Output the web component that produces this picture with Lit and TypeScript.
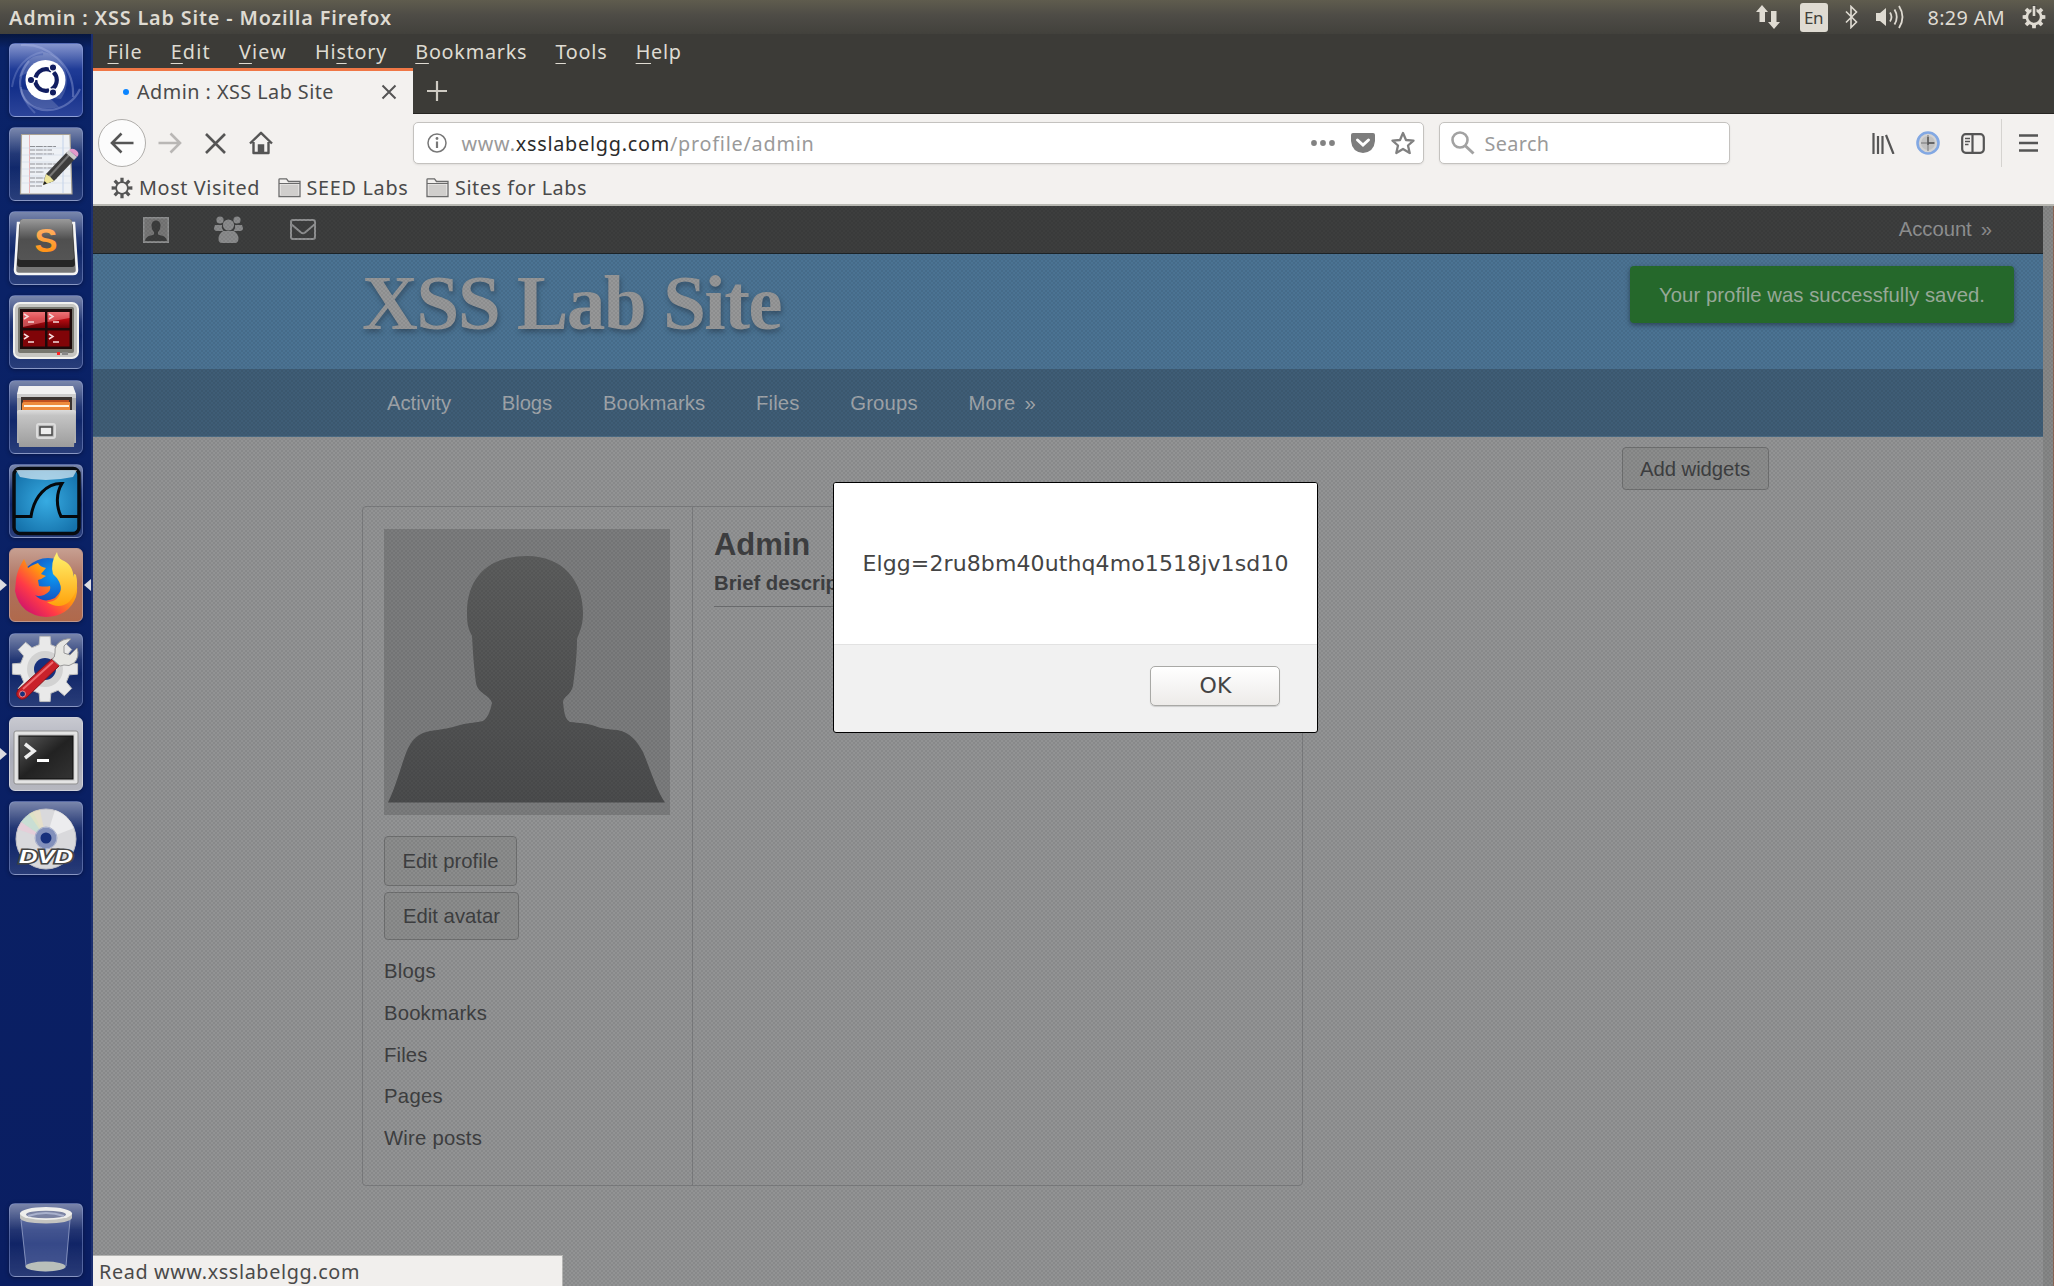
import { LitElement, html, svg, css } from "lit";
import { customElement, property } from "lit/decorators.js";

/** A label whose tracking is adjusted so that it spans a given width. */
@customElement("fit-text")
class FitText extends LitElement {
  @property({ type: Number }) w = 0;
  static styles = css`
    :host { display: inline-block; white-space: pre; }
    .t { display: inline-block; }
  `;
  render() { return html`<span class="t"><slot></slot></span>`; }
  firstUpdated() {
    const n = (this.textContent || "").length;
    const el = this.renderRoot.querySelector(".t") as HTMLElement;
    const natural = el.getBoundingClientRect().width;
    if (this.w && n) this.style.letterSpacing = ((this.w - natural) / n).toFixed(3) + "px";
  }
}

const gearPath = (teeth: number, ro: number, ri: number, c: number) => {
  let d = "";
  for (let i = 0; i < teeth; i++) {
    const s = (Math.PI * 2) / teeth, a = i * s - Math.PI / 2;
    const p = (r: number, o: number) => `${(c + r * Math.cos(a + o)).toFixed(2)} ${(c + r * Math.sin(a + o)).toFixed(2)}`;
    d += `${i ? "L" : "M"}${p(ri, -s * 0.3)}L${p(ro, -s * 0.2)}L${p(ro, s * 0.2)}L${p(ri, s * 0.3)}`;
  }
  return d + "Z";
};

const defs = svg`<defs>
  <linearGradient id="steel" x1="0" y1="0" x2="0" y2="1"><stop offset="0" stop-color="#dcdcdc"/><stop offset=".15" stop-color="#c4c4c4"/><stop offset="1" stop-color="#9c9c9c"/></linearGradient>
  <linearGradient id="dark" x1="0" y1="0" x2="0" y2="1"><stop offset="0" stop-color="#9a9a9a"/><stop offset=".5" stop-color="#4f4f4f"/><stop offset="1" stop-color="#555"/></linearGradient>
  <linearGradient id="scr" x1="0" y1="0" x2="1" y2="1"><stop offset="0" stop-color="#5a5a5a"/><stop offset=".5" stop-color="#222"/><stop offset="1" stop-color="#333"/></linearGradient>
  <linearGradient id="red" x1="0" y1="0" x2="0" y2="1"><stop offset="0" stop-color="#e0585c"/><stop offset=".4" stop-color="#c00c12"/><stop offset="1" stop-color="#6a0004"/></linearGradient>
  <linearGradient id="org" x1="0" y1="0" x2="0" y2="1"><stop offset="0" stop-color="#ffb87a"/><stop offset="1" stop-color="#ff8a00"/></linearGradient>
  <linearGradient id="fox" x1="1" y1="0" x2="0" y2="1"><stop offset="0" stop-color="#ffe945"/><stop offset=".4" stop-color="#ff980e"/><stop offset=".65" stop-color="#ff3a47"/><stop offset="1" stop-color="#b5007f"/></linearGradient>
  <linearGradient id="tail" x1="0" y1="0" x2="0" y2="1"><stop offset="0" stop-color="#fff36e"/><stop offset="1" stop-color="#ffa20c"/></linearGradient>
  <radialGradient id="globe" cx=".6" cy=".3" r=".8"><stop offset="0" stop-color="#0a9bf5"/><stop offset="1" stop-color="#20219c"/></radialGradient>
  <radialGradient id="sea" cx=".5" cy=".5" r=".6"><stop offset="0" stop-color="#37abe2"/><stop offset="1" stop-color="#1572ab"/></radialGradient>
</defs>`;

const launcher: { name: string; cls?: string; art: unknown }[] = [
  { name: "Dash", cls: "dash", art: svg`
    <path d="M34 9C58 12 64 40 52 56L36 54ZM12 46C10 60 30 70 50 64L36 50ZM10 34C14 18 26 8 40 14L30 24Z" fill="#fff" opacity=".16"/>
    <path d="M12 2C38 0 66 22 64 54M71 46C60 70 28 74 16 56C8 44 10 30 20 18" fill="none" stroke="#b4c0ea" stroke-opacity=".35" stroke-width="2.200"/>
    <path d="M3 44C6 24 18 12 34 9M26 70C18 62 12 54 12 44" fill="none" stroke="#b4c0ea" stroke-opacity=".25" stroke-width="2"/>
    <circle cx="36.500" cy="37" r="20" fill="#fff"/>
    <circle cx="37" cy="37" r="10.800" fill="none" stroke="#111d60" stroke-width="4.200" stroke-dasharray="20.200 2.400" stroke-dashoffset="9"/>
    <g fill="#111d60" stroke="#fff" stroke-width="1.300"><circle cx="22" cy="37" r="3.700"/><circle cx="44" cy="24.500" r="3.700"/><circle cx="44" cy="49.500" r="3.700"/></g>` },
  { name: "Text Editor", art: svg`
    <path d="M12.500 7.500H61L63 67H11.500Z" fill="#eef1f5" stroke="#a9a294" stroke-width="1.200"/>
    <path d="M20.500 8V66" stroke="#e9b5b9"/><path d="M54 8V66" stroke="#c3d2ea"/>
    <g stroke="#8d9095" stroke-width="1.200" stroke-dasharray="5 .8 7 .8 3 .8"><path d="M21 19.500H47M21 23H43M21 27H45M21 31H33M21 37H47M21 41H44M21 45H35M21 51H48M21 55H42M21 59H33"/></g>
    <path d="M13 21h49M13 28h49M13 35h49M13 42h49M13 49h49M13 56h49" stroke="#c9d5e6" stroke-width=".5"/>
    <path d="M34 58L37 47L58 25L66 32L45 54Z" fill="#3d3d3d"/><path d="M40 50L60 28" stroke="#777" stroke-width="2"/>
    <path d="M34 58L37 47Q41 49 45 54Z" fill="#efe69a"/><path d="M34 58l1.500-4 2.500 2.600Z" fill="#222"/>
    <path d="M57 26L60 23L68 30L65 33Z" fill="#c9c9c9"/><path d="M60 23Q64 20 68 24Q71 27 68 30Z" fill="#e39acb"/>` },
  { name: "Sublime Text", art: svg`
    <path d="M9 12L6 59Q6 63 10 63H64Q68 63 68 59L65 12Z" fill="#777" stroke="#f5f5f5" stroke-width="2.500"/>
    <path d="M14 8H60Q63 8 63 11L66 53Q66 56 63 56H11Q8 56 8 53L11 11Q11 8 14 8Z" fill="#262626"/>
    <path d="M14 8H60Q63 8 63 11L65 46Q65 49 62 49H12Q9 49 9 46L11 11Q11 8 14 8Z" fill="url(#dark)"/>
    <text x="37" y="40.500" text-anchor="middle" font-family="Liberation Sans" font-size="33" font-weight="bold" textLength="23" lengthAdjust="spacingAndGlyphs" fill="url(#org)">S</text>` },
  { name: "Terminator", art: svg`
    <rect x="5" y="8" width="64" height="55" rx="6" fill="#c6c6c2" stroke="#f1f1ee" stroke-width="2"/>
    <rect x="9" y="12" width="56" height="46" rx="2" fill="#77776f"/>
    <rect x="11" y="14" width="52" height="40" fill="#1c0a0a"/>
    <path d="M14 17h22v16H14ZM38.500 17h22v16h-22Z" fill="url(#red)"/><path d="M14 35.500h22v16H14ZM38.500 35.500h22v16h-22Z" fill="#800408"/>
    <path d="M14 17h22v10L14 32ZM38.500 17h22v6l-22 4Z" fill="#f58b8d" opacity=".55"/>
    <g fill="none" stroke="#f5dada" stroke-width="1.500"><path d="M15 19l4 2.500-4 2.500M19 27h6M40 19l4 2.500-4 2.500M44 27h6M15 39l4 2.500-4 2.500M19 47h6M40 39l4 2.500-4 2.500M44 47h6"/></g>
    <rect x="48" y="57" width="3" height="3" fill="#f22"/><rect x="53" y="57" width="6" height="3" fill="#888"/>` },
  { name: "Files", art: svg`
    <path d="M10 6H64L67 17V63H8V17Z" fill="#b0b0b0"/><path d="M10 6H64L67 14H8Z" fill="#f1f1f1"/><path d="M8 14H67V18H8Z" fill="#cdcdcd"/>
    <path d="M12 17H63V32H12Z" fill="#3b3431"/><path d="M14 20H60V34H14Z" fill="#c0501f"/><path d="M13 24Q13 22 15 22H61V34H13Z" fill="#ee8b3d"/><path d="M15 25H60V27H15Z" fill="#fff3e0"/>
    <path d="M8 32Q8 30 10 30H65Q67 30 67 32L65 67H10Z" fill="url(#steel)"/>
    <rect x="28" y="44" width="18" height="14" rx="2" fill="#bbb" stroke="#dcdcdc" stroke-width="2"/><rect x="31" y="47" width="12" height="8" fill="#eee" stroke="#444" stroke-width="1.500"/>` },
  { name: "Wireshark", art: svg`
    <rect x="5" y="4.500" width="65" height="65" rx="6" fill="url(#sea)" stroke="#070b10" stroke-width="3.500"/>
    <path d="M7 6H68L64 13Q36 19 11 13Z" fill="#fff" opacity=".6"/>
    <path d="M6 52.500H22C25 32 38 19 53 19.500C47 29 47 42 52 52.500H69" fill="none" stroke="#05080b" stroke-width="3"/>` },
  { name: "Firefox", cls: "fox", art: svg`
    <circle cx="39" cy="38" r="28" fill="url(#globe)"/>
    <path d="M7 32C8 23 12 16 15 11L19 20C23 17 27 16 29 15Q31 19 37 20L32 26L37 28Q33 31 29 32L30 38Q36 39 41 38Q43 43 35 47Q29 49 26 47Q34 56 46 50Q54 43 52 34L65 29Q70 38 67 49Q60 68 37 69Q11 67 6 43Z" fill="url(#fox)"/>
    <path d="M48 4Q41 15 44 26Q52 33 52 42Q50 54 38 54Q50 62 60 54Q71 42 67 27Q64 24 65 31Q64 16 53 12Q49 10 48 4Z" fill="url(#tail)"/>` },
  { name: "System Settings", art: svg`
    <path d="${gearPath(8, 33, 25, 37)}" transform="translate(-1 -1)" fill="#e9e9e9" stroke="#bdbdbd"/>
    <circle cx="36" cy="36" r="18" fill="#d2d2d2"/><circle cx="36" cy="36" r="11" fill="#17307c"/>
    <path d="M9 57L44 25L51 32L18 64Q12 69 8 63Q7 60 9 57Z" fill="#c9212a" stroke="#8b1017"/><path d="M14 56L44 29" stroke="#ef6a6e" stroke-width="2"/><circle cx="13.500" cy="61" r="3" fill="#17307c" stroke="#e88"/>
    <path d="M43 26Q46 25 46 20Q45 11 54 7Q60 5 62 6L55 13V20L61 22L68 15Q71 24 65 30Q60 34 55 32L51 33Z" fill="#e6e6e2" stroke="#999"/>` },
  { name: "Terminal", cls: "term", art: svg`
    <rect x="5" y="14" width="64" height="53" rx="2" fill="#e4e4e4" stroke="#8f8f8f"/><rect x="8.500" y="17" width="57" height="47" fill="#cfcfcf"/>
    <rect x="10" y="19" width="54" height="43" fill="url(#scr)" stroke="#0d0d0d"/>
    <path d="M16 27L25 34L16 41" fill="none" stroke="#eee" stroke-width="3.500"/><path d="M28 43.500H40" stroke="#fff" stroke-width="3"/>` },
  { name: "DVD", art: svg`
    <circle cx="37" cy="38" r="30" fill="#d9d9dc" stroke="#c3c3c8"/>
    <path d="M37 38L12 21Q17 14 24 11Z" fill="#b9e3cc" opacity=".5"/><path d="M37 38L20 13Q25 9 31 9Z" fill="#f3e6b8" opacity=".5"/><path d="M37 38L8 28L12 21Z" fill="#f2c6d6" opacity=".5"/><path d="M37 38L46 9Q58 12 65 27Z" fill="#fff" opacity=".5"/>
    <circle cx="37" cy="37" r="8" fill="#17307c" stroke="#8290bb" stroke-width="5"/><circle cx="37" cy="37" r="11" fill="none" stroke="#a7b0cd"/>
    <text x="37" y="62" text-anchor="middle" font-family="Liberation Sans" font-size="19" font-weight="bold" font-style="italic" textLength="54" lengthAdjust="spacingAndGlyphs" fill="#fff" stroke="#444" stroke-width="3" paint-order="stroke">DVD</text>` },
];

const trash = svg`
  <path d="M12 15L17 65Q37 72 57 65L61 15Z" fill="#8fa0d8" fill-opacity=".3"/>
  <path d="M12 17L17 63M61 17L57 63" stroke="#b9c3e4" stroke-opacity=".6"/>
  <ellipse cx="36.500" cy="63.500" rx="20" ry="5" fill="#b9bfba"/>
  <path d="M11 10V15Q12 20 37 20.500Q61 20 63 15V10Z" fill="#c4c4c0"/>
  <ellipse cx="37" cy="10.500" rx="26" ry="6.500" fill="#eeeeec"/><ellipse cx="37" cy="11.500" rx="20" ry="3.800" fill="#7a82a2"/><path d="M19 13Q37 7 55 13" stroke="#a9b1cd" stroke-width="2" fill="none"/>`;

const avatar = svg`<path d="M4 273.500C12 257 17 237 22 224C28 209 35 204 46 202C60 200 66 199 76 196C87 193 92 194 99 192C106 187 107 177 108 174C106 166 94 165 92 154C90 139 89 125 88 107C84 99 83 95 83 84C83 47 106 27 143 27C179 27 199 52 199 84C199 96 196 102 193 110C193 128 191 142 189 157C187 166 179 168 179 173C180 180 180 190 186 193C196 194 202 194 211 197C218 200 224 200 233 201C246 203 253 212 259 223C267 242 272 260 281 273.500Z" fill="url(#avg)"/>`;

const navItems: [string, number][] = [["Activity", 64], ["Blogs", 50.5], ["Bookmarks", 102.5], ["Files", 43.5], ["Groups", 67.5], ["More", 47]];
const menuItems: [string, string, string, number][] = [["", "F", "ile", 35], ["", "E", "dit", 40], ["", "V", "iew", 48], ["Hi", "s", "tory", 72], ["", "B", "ookmarks", 112], ["", "T", "ools", 52], ["", "H", "elp", 46]];
const sideLinks: [string, number][] = [["Blogs", 52], ["Bookmarks", 103], ["Files", 43.5], ["Pages", 59], ["Wire posts", 98]];

@customElement("app-root")
class AppRoot extends LitElement {
  static styles = css`
    :host { display: block; width: 2054px; height: 1286px; overflow: hidden; font-family: "Liberation Sans", Arial, sans-serif; font-size: 20.300px; }
    * { box-sizing: border-box; }
    svg { display: block; flex: none; }
    .desk { height: 1286px; display: flex; flex-direction: column; position: relative; overflow: hidden; }
    .ui { font-family: "Noto Sans", "Open Sans", sans-serif; font-size: 19.800px; }
    .panel { height: 34px; flex: none; display: flex; align-items: center; background: linear-gradient(#5f5c4e, #4e4c46 45%, #42413c); color: #dfdbd2; padding: 0 8px 0 9px; font-weight: 600; }
    .panel .tray { margin-left: auto; display: flex; align-items: center; font-weight: 400; }
    .en { width: 28px; height: 29px; background: #dfdbd2; color: #403f3a; border-radius: 3px; font-size: 17px; line-height: 30px; text-align: center; margin: 0 17px 0 19px; }
    .vol { margin-left: 18px; }
    .clock { margin: 0 17px 0 22px; }
    .body { flex: 1; display: flex; min-height: 0; }
    .dock { width: 93px; flex: none; padding: 8.500px 0 9px 9px; background: linear-gradient(#06163f, #0a2368 14px, #0a1e62); border-right: 2px solid #1c2f70; display: flex; flex-direction: column; gap: 10.300px; }
    .tile { position: relative; width: 74px; height: 74px; flex: none; border-radius: 6px; border: 1px solid rgba(160,178,232,.4); background: linear-gradient(rgba(255,255,255,.46), rgba(255,255,255,.1) 36%, rgba(255,255,255,.03) 55%, rgba(255,255,255,.13)); box-shadow: 0 1px 4px rgba(0,0,20,.4); }
    .tile svg { margin: -1px; }
    .tile.dash { background: linear-gradient(#8696ce, #203c97 35%, #132f8a 60%, #2c4499); }
    .tile.fox { background: linear-gradient(#c79f91, #ad7260 45%, #b0694b); border-color: #c0968a; }
    .tile.term { background: linear-gradient(#c8c9d0, #a9abb8 50%, #b6b7bf); border-color: #cfd1da; }
    .tile:last-child { margin-top: auto; }
    .pip { position: absolute; left: -10px; top: 30px; border: 6.500px solid transparent; border-left: 7px solid #dcdce0; border-right: 0; }
    .pip.r { left: auto; right: -9px; border-right: 7px solid #dcdce0; border-left: 0; }
    .win { flex: 1; min-width: 0; display: flex; flex-direction: column; }
    .menu { height: 34px; flex: none; background: #3c3b37; color: #dfdbd2; display: flex; align-items: center; gap: 28.200px; padding-left: 14.500px; }
    .menu u { text-underline-offset: 4px; text-decoration-thickness: 1px; }
    .tabs { height: 46px; flex: none; background: #3c3b37; border-bottom: 1px solid #262522; display: flex; color: #4a4a4a; }
    .tab { width: 320px; height: 46px; background: #f3f1ef; border-top: 3px solid #f07746; display: flex; align-items: center; padding: 0 16px 2px 30px; }
    .dot { width: 6px; height: 6px; border-radius: 50%; background: #0a84ff; margin-right: 8px; }
    .tab svg { margin-left: auto; }
    .plus { margin: 13px 0 0 14px; }
    .tool { height: 58px; flex: none; background: #f3f1ef; display: flex; align-items: center; padding-left: 4.500px; color: #5c5c5c; }
    .tool fit-text { padding-top: 1px; }
    .back { width: 48px; height: 48px; border-radius: 50%; background: #fcfcfc; border: 1px solid #b0aeab; display: grid; place-items: center; }
    .fwd { margin-left: 12px; }
    .stop { margin-left: 23px; }
    .field { height: 42px; background: #fff; border: 1px solid #c4c2bf; border-radius: 5px; display: flex; align-items: center; color: #9a9a9a; box-shadow: 0 1px 2px rgba(0,0,0,.08); }
    .url { width: 1011px; margin-left: 140.500px; padding: 0 8px 0 13px; }
    .url b { font-weight: 400; color: #2b2b2b; }
    .url fit-text { margin-left: 14.500px; }
    .url .acts { margin-left: auto; display: flex; gap: 16px; align-items: center; }
    .search { width: 291px; margin-left: 15px; padding-left: 11px; gap: 9.500px; }
    .right { margin-left: 142px; display: flex; align-items: center; }
    .addon { margin-left: 21px; }
    .sep { width: 1px; height: 48px; background: #d5d3d0; margin: 0 17px 0 16px; }
    .marks { height: 34px; flex: none; background: #f3f1ef; border-bottom: 2px solid #b8b8b2; display: flex; align-items: center; padding: 0 0 1px 18px; color: #4a4a4a; }
    .marks fit-text { margin: 0 17.500px 0 6px; }
    .view { flex: 1; display: flex; min-height: 0; position: relative; background: #929394; }
    .site { flex: 1; display: flex; flex-direction: column; min-width: 0; }
    .bar { width: 11px; background: #868787; border-right: 1px solid #8c6656; }
    .veil { position: absolute; inset: 0; pointer-events: none; background-image: radial-gradient(circle at 1px 1px, rgba(0,0,0,.065) 0 .9px, transparent 1.200px), radial-gradient(circle at 3px 3px, rgba(0,0,0,.065) 0 .9px, transparent 1.200px); background-size: 4px 4px; }
    .top { height: 48px; flex: none; background: #3d3e3e; border-bottom: 1px solid #1c2429; display: flex; align-items: center; padding: 0 51px 0 50px; color: #909192; }
    .top .acc { margin-left: auto; display: flex; gap: 9px; padding-bottom: 1px; }
    .usr { margin-left: 45px; }
    .mail { margin-left: 47px; }
    .head { height: 115px; flex: none; background: #4b7393; padding-left: 269px; }
    h1 { margin: 0; font: bold 77.500px/98px "Liberation Serif", serif; color: #969798; text-shadow: 1px 3px 5px rgba(30,40,50,.45); }
    .nav { height: 68px; flex: none; background: #3f5d76; display: flex; align-items: center; padding: 2px 0 0 294px; gap: 50.700px; color: #a0a5aa; border-bottom: 1px solid #4d6d86; }
    .nav .more { display: flex; gap: 9px; }
    .main { flex: 1; position: relative; display: flex; flex-direction: column; color: #3e3f41; }
    .btn { border: 1px solid #6f7071; border-radius: 4px; background: #8b8c8c; display: flex; align-items: center; justify-content: center; padding-top: 1px; }
    .add { width: 147px; height: 43px; margin: 10px 0 0 1528.500px; }
    .card { width: 941px; height: 680px; margin: 16px 0 0 269px; border: 1px solid #7b7c7e; border-radius: 4px; display: flex; }
    .owner { width: 330px; border-right: 1px solid #7b7c7e; padding: 22px 21px; }
    .owner .pic { background: #7b7c7d; width: 286px; height: 286px; margin-bottom: 21px; }
    .ep { width: 133px; height: 50px; margin-bottom: 6px; }
    .ea { width: 135px; height: 48px; margin-bottom: 10px; }
    .lk { height: 41.750px; line-height: 42px; }
    .info { flex: 1; padding: 19px 21px; }
    h2 { margin: 0; font-size: 31px; line-height: 38px; }
    .brief { font-weight: bold; font-size: 20.300px; line-height: 36px; height: 43px; border-bottom: 1px solid #6d6e70; white-space: nowrap; padding-top: 1px; }
    .toast { position: absolute; left: 1630px; top: 266px; width: 384px; height: 57px; background: #25682b; border-radius: 4px; color: #97a898; box-shadow: 0 2px 5px rgba(0,0,0,.4); display: flex; align-items: center; justify-content: center; padding-top: 1px; }
    .dlg { position: absolute; left: 833px; top: 482px; width: 485px; height: 251px; background: #f1f1f1; border: 1px solid #000; border-radius: 3px; overflow: hidden; display: flex; flex-direction: column; font-family: "DejaVu Sans", sans-serif; font-size: 22px; color: #444; }
    .msg { height: 162px; background: #fff; border-bottom: 1px solid #e2e2e2; display: flex; align-items: center; padding-left: 28.500px; }
    .ok { margin: 21px 0 0 316px; width: 130px; height: 40px; padding: 0 0 2px 1px; border: 1px solid #a9a9a6; border-radius: 5px; background: linear-gradient(#fff, #edebe9); box-shadow: 0 1px 1px rgba(0,0,0,.15); display: flex; align-items: center; justify-content: center; }
    .stat { position: absolute; left: 93px; top: 1255px; width: 470px; height: 32px; background: #f1efed; border-top: 1px solid #b5b5b3; border-right: 1px solid #b5b5b3; padding: 0 0 0 6px; line-height: 32px; color: #4a4a4a; }
  `;

  tile(t: { cls?: string; art: unknown }) {
    return html`<div class="tile ${t.cls || ""}">
      ${t.cls === "fox" || t.cls === "term" ? html`<i class="pip"></i>` : ""}${t.cls === "fox" ? html`<i class="pip r"></i>` : ""}
      <svg width="74" height="74" viewBox="0 0 74 74">${defs}${t.art}</svg></div>`;
  }

  folder() {
    return html`<svg width="23" height="20" viewBox="0 0 23 20"><path d="M1 18.500V1.500Q1 .8 1.800 .8H8.500L10.500 3.500H22V18.500Z" fill="#f3f1ef" stroke="#6b6b6b" stroke-width="1.300"/><path d="M2.500 6.500H20.500V17H2.500Z" fill="#d0cecc"/><path d="M1 5.500H22" stroke="#6b6b6b"/></svg>`;
  }

  render() {
    return html`<div class="desk">
      <div class="panel ui"><fit-text .w=${383}>Admin : XSS Lab Site - Mozilla Firefox</fit-text>
        <div class="tray">
          <svg width="26" height="24" viewBox="0 0 26 24" fill="#dfdbd2"><path d="M7 0L13 7H10V17H4.500V7H1ZM19 24L13 17H16V6H21.500V17H25Z"/></svg>
          <div class="en"><fit-text .w=${19}>En</fit-text></div>
          <svg width="13" height="24" viewBox="0 0 13 24" fill="none" stroke="#dfdbd2" stroke-width="1.600"><path d="M1 6.500L11.500 17L6 22.500V1.500L11.500 7L1 17.500"/></svg>
          <svg class="vol" width="30" height="24" viewBox="0 0 30 24"><path d="M0 8H4L10 3V21L4 16H0Z" fill="#dfdbd2"/><g fill="none" stroke="#dfdbd2" stroke-width="1.800"><path d="M14 7.500Q17 12 14 16.500"/><path d="M18.500 4.500Q23 12 18.500 19.500"/><path d="M23 1Q30 12 23 23"/></g></svg>
          <fit-text class="clock" .w=${77.5}>8:29 AM</fit-text>
          <svg width="24" height="24" viewBox="0 0 24 24"><path d="${gearPath(8, 11.5, 8.5, 12)}" fill="#dfdbd2"/><circle cx="12" cy="12" r="5.800" fill="#4b4943"/><path d="M9.500 0H14.500V8H9.500Z" fill="#4b4943"/><path d="M12 1V11" stroke="#dfdbd2" stroke-width="2.600"/></svg>
        </div></div>
      <div class="body">
        <div class="dock">${launcher.map((t) => this.tile(t))}${this.tile({ art: trash })}</div>
        <div class="win">
          <div class="menu ui">${menuItems.map(([a, u, b, w]) => html`<fit-text .w=${w}>${a}<u>${u}</u>${b}</fit-text>`)}</div>
          <div class="tabs ui">
            <div class="tab"><i class="dot"></i><fit-text .w=${197}>Admin : XSS Lab Site</fit-text>
              <svg width="16" height="16" viewBox="0 0 16 16" stroke="#555" stroke-width="2"><path d="M1.500 1.500L14.500 14.500M14.500 1.500L1.500 14.500"/></svg></div>
            <svg class="plus" width="20" height="20" viewBox="0 0 20 20" stroke="#cfcbc3" stroke-width="2.200"><path d="M10 0V20M0 10H20"/></svg>
          </div>
          <div class="tool ui">
            <div class="back"><svg width="24" height="22" viewBox="0 0 24 22" fill="none" stroke="#555" stroke-width="2.600"><path d="M11.500 1.500L2 11L11.500 20.500M2 11H23.500"/></svg></div>
            <svg class="fwd" width="24" height="22" viewBox="0 0 24 22" fill="none" stroke="#b9b7b5" stroke-width="2.600"><path d="M12.500 1.500L22 11L12.500 20.500M22 11H.5"/></svg>
            <svg class="stop" width="21" height="21" viewBox="0 0 21 21" stroke="#555" stroke-width="2.600"><path d="M1 1L20 20M20 1L1 20"/></svg>
            <svg class="stop" width="24" height="24" viewBox="0 0 24 24" fill="none" stroke="#555" stroke-width="2.400"><path d="M1 12.500L12 1.800L23 12.500M4.500 11V22H19.500V11" stroke-linejoin="round"/><path d="M9.500 22V14H14.500V22Z" fill="#555" stroke-width="1.500"/></svg>
            <div class="field url">
              <svg width="20" height="20" viewBox="0 0 20 20"><circle cx="10" cy="10" r="9" fill="none" stroke="#777" stroke-width="1.500"/><circle cx="10" cy="5.500" r="1.400" fill="#777"/><path d="M10 8.500V15" stroke="#777" stroke-width="2.200"/></svg>
              <fit-text .w=${353}>www.<b>xsslabelgg.com</b>/profile/admin</fit-text>
              <div class="acts">
                <svg width="24" height="6" viewBox="0 0 24 6" fill="#828282"><circle cx="3" cy="3" r="2.900"/><circle cx="12" cy="3" r="2.900"/><circle cx="21" cy="3" r="2.900"/></svg>
                <svg width="24" height="20" viewBox="0 0 24 20"><path d="M2 0H22Q24 0 24 2V8Q23 19 12 20Q1 19 0 8V2Q0 0 2 0Z" fill="#7d7d7d"/><path d="M6.500 7L12 12L17.500 7" fill="none" stroke="#fff" stroke-width="3" stroke-linecap="round"/></svg>
                <svg width="24" height="24" viewBox="0 0 24 24"><path d="M12 2L15 9L22.500 9.600L17 14.500L18.700 22L12 18L5.300 22L7 14.500L1.500 9.600L9 9Z" fill="none" stroke="#808080" stroke-width="2.300" stroke-linejoin="round"/></svg>
              </div></div>
            <div class="field search"><svg width="24" height="24" viewBox="0 0 24 24" fill="none" stroke="#a2a2a2" stroke-width="2.600"><circle cx="9" cy="9" r="7.500"/><path d="M14 14.500L22.500 22.500" stroke-width="3"/></svg><fit-text .w=${65}>Search</fit-text></div>
            <div class="right">
              <svg width="23" height="21" viewBox="0 0 23 21" stroke="#555" stroke-width="2.200"><path d="M1.500 0V21M6 3V21M10.500 3V21M14 2L21.500 21"/></svg>
              <svg class="addon" width="24" height="24" viewBox="0 0 24 24"><circle cx="12" cy="12" r="10.500" fill="#d3d3d3" stroke="#82a8e3" stroke-width="2.600"/><circle cx="12" cy="12" r="7" fill="#c1c1c1"/><path d="M12 4V20M5 12H19" stroke="#8d8d8d" stroke-width="1.400"/><path d="M12 6V14M12 12H18" stroke="#555" stroke-width="1.400"/></svg>
              <svg class="addon" width="24" height="21" viewBox="0 0 24 21" fill="none" stroke="#555" stroke-width="2.200"><rect x="1.200" y="1.200" width="21.600" height="18.600" rx="3.500"/><path d="M11.500 1V20"/><path d="M4 5.500H9M4 8.500H9M4 11.500H7.500" stroke-width="1.300"/></svg>
              <div class="sep"></div>
              <svg width="19" height="18" viewBox="0 0 19 18" stroke="#555" stroke-width="2.600"><path d="M0 1.500H19M0 9H19M0 16.500H19"/></svg>
            </div></div>
          <div class="marks ui">
            <svg width="22" height="22" viewBox="0 0 22 22"><path d="${gearPath(8, 10.5, 6.8, 11)}" fill="#555"/><circle cx="11" cy="11" r="5" fill="#f3f1ef"/></svg>
            <fit-text .w=${121}>Most Visited</fit-text>${this.folder()}<fit-text .w=${102}>SEED Labs</fit-text>${this.folder()}<fit-text .w=${132}>Sites for Labs</fit-text></div>
          <div class="view"><div class="site">
            <div class="top">
              <svg width="26" height="26" viewBox="0 0 26 26"><rect width="26" height="26" fill="#8f9091"/><rect x="1.500" y="1.500" width="23" height="23" fill="#777"/><path d="M2 24Q3 19 8 18.500L11 17.500V15Q8.500 13 8.500 8Q9 3.500 13 3.500Q17 3.500 17.500 8Q17.500 13 15 15V17.500L18 18.500Q23 19 24 24Z" fill="#3c3d3d"/></svg>
              <svg class="usr" width="29" height="27" viewBox="0 0 29 27" fill="#8a8b8c"><circle cx="6" cy="4" r="3.600"/><circle cx="23" cy="4" r="3.600"/><path d="M1 9H8Q7 12 9.500 15H3Q0 15 0 12ZM28 9H21Q22 12 19.500 15H26Q29 15 29 12Z"/><circle cx="14.500" cy="9" r="5.600"/><path d="M9 15H20Q24.500 18 24.500 23Q24 27 21 27H8Q4.500 27 4.500 23Q4.500 18 9 15Z"/></svg>
              <svg class="mail" width="26" height="21" viewBox="0 0 26 21" fill="none" stroke="#8f9091" stroke-width="2"><rect x="1" y="1" width="24" height="19" rx="2"/><path d="M1 5L11 13.500Q13 15 15 13.500L25 5"/></svg>
              <div class="acc"><fit-text .w=${73}>Account</fit-text><span>»</span></div></div>
            <div class="head"><h1><fit-text .w=${419}>XSS Lab Site</fit-text></h1></div>
            <div class="nav">${navItems.map(([n, w], i) => i < 5 ? html`<fit-text .w=${w}>${n}</fit-text>` : html`<div class="more"><fit-text .w=${w}>${n}</fit-text><span>»</span></div>`)}</div>
            <div class="main">
              <div class="btn add"><fit-text .w=${110}>Add widgets</fit-text></div>
              <div class="card">
                <div class="owner">
                  <svg class="pic" width="286" height="286" viewBox="0 0 286 286"><defs><linearGradient id="avg" x1="0" y1="0" x2="0" y2="1"><stop offset="0" stop-color="#5c5d5d"/><stop offset="1" stop-color="#4b4c4d"/></linearGradient></defs>${avatar}</svg>
                  <div class="btn ep"><fit-text .w=${96}>Edit profile</fit-text></div>
                  <div class="btn ea"><fit-text .w=${97}>Edit avatar</fit-text></div>
                  ${sideLinks.map(([l, w]) => html`<div class="lk"><fit-text .w=${w}>${l}</fit-text></div>`)}
                </div>
                <div class="info"><h2><fit-text .w=${96}>Admin</fit-text></h2><div class="brief">Brief description</div></div>
              </div></div></div>
            <div class="bar"></div><div class="veil"></div></div>
        </div></div>
      <div class="toast"><fit-text .w=${326}>Your profile was successfully saved.</fit-text></div>
      <div class="dlg"><div class="msg"><fit-text .w=${426}>Elgg=2ru8bm40uthq4mo1518jv1sd10</fit-text></div><div class="ok"><fit-text .w=${32}>OK</fit-text></div></div>
      <div class="stat ui"><fit-text .w=${261}>Read www.xsslabelgg.com</fit-text></div>
    </div>`;
  }
}
